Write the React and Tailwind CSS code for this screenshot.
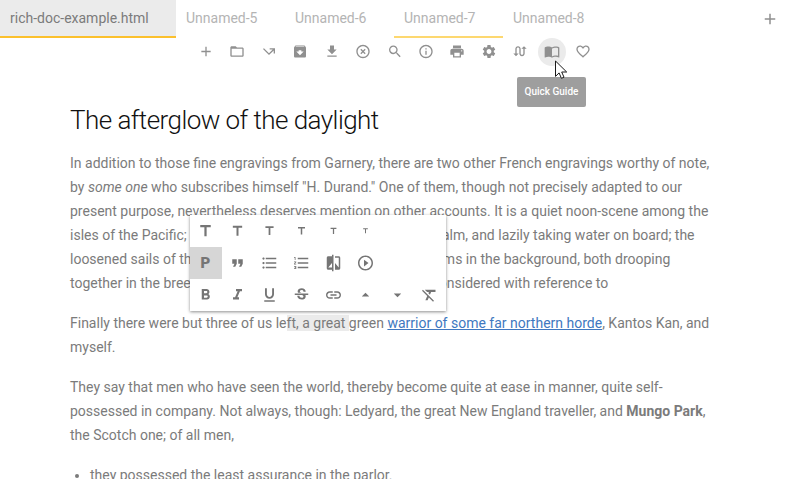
import React from "react";
import {
  MdAdd, MdFolderOpen, MdCallMissedOutgoing, MdArchive, MdFileDownload, MdHighlightOff,
  MdSearch, MdInfoOutline, MdPrint, MdSettings, MdSwapCalls, MdFavoriteBorder, MdTitle,
  MdFormatQuote, MdFormatListBulleted, MdFormatListNumbered, MdCompare, MdPlayCircleOutline,
  MdFormatBold, MdFormatItalic, MdFormatUnderlined, MdStrikethroughS, MdLink,
  MdArrowDropUp, MdArrowDropDown, MdFormatClear,
} from "react-icons/md";

function GuideIcon({ size }) {
  return (
    <svg width={size} height={size} viewBox="0 0 24 24" fill="currentColor">
      <path d="M21 5c-1.11-.35-2.33-.5-3.5-.5-1.95 0-4.05.4-5.5 1.5-1.45-1.1-3.55-1.5-5.5-1.5S2.45 4.9 1 6v14.65c0 .25.25.5.5.5.1 0 .15-.05.25-.05C3.1 20.45 5.05 20 6.5 20c1.95 0 4.05.4 5.5 1.5 1.35-.85 3.8-1.5 5.5-1.5 1.65 0 3.35.3 4.75 1.05.1.05.15.05.25.05.25 0 .5-.25.5-.5V6c-.6-.45-1.25-.75-2-1zm0 13.5c-1.1-.35-2.3-.5-3.5-.5-1.7 0-4.15.65-5.5 1.5V8c1.35-.85 3.8-1.5 5.5-1.5 1.2 0 2.4.15 3.5.5v11.5z" />
    </svg>
  );
}

function Tab({ children, className }) {
  return (
    <div className={"h-[38px] shrink-0 border-b-2 pl-[10px] text-[14px] leading-[37px] " + className}>
      {children}
    </div>
  );
}

const tools = [
  MdAdd, MdFolderOpen, MdCallMissedOutgoing, MdArchive, MdFileDownload, MdHighlightOff,
  MdSearch, MdInfoOutline, MdPrint, MdSettings, MdSwapCalls, GuideIcon, MdFavoriteBorder,
];

const blocks = [null, MdFormatQuote, MdFormatListBulleted, MdFormatListNumbered, MdCompare, MdPlayCircleOutline];
const inline = [
  MdFormatBold, MdFormatItalic, MdFormatUnderlined, MdStrikethroughS, MdLink,
  MdArrowDropUp, MdArrowDropDown, MdFormatClear,
];

function Cell({ children, active }) {
  return (
    <div className={"flex size-8 items-center justify-center " + (active ? "bg-[#d6d6d6]" : "")}>
      <div className="-translate-x-[0.5px]">{children}</div>
    </div>
  );
}

function FormatPopup() {
  return (
    <div className="absolute left-[190px] top-[215px] h-24 w-64 bg-white text-[#757575] shadow-[0_1px_3px_rgba(0,0,0,0.45)]">
      <div className="flex">
        {[18, 16, 14, 12, 10, 8].map((size) => (
          <Cell key={size}><MdTitle size={size} /></Cell>
        ))}
      </div>
      <div className="flex">
        {blocks.map((Icon, i) => (
          <Cell key={i} active={i === 0}>
            {Icon ? <Icon size={18} /> : <span className="block text-[15px] font-black leading-none">P</span>}
          </Cell>
        ))}
      </div>
      <div className="flex">
        {inline.map((Icon, i) => (
          <Cell key={i}><Icon size={18} /></Cell>
        ))}
      </div>
    </div>
  );
}

export default function App() {
  return (
    <div className="relative h-[479px] w-[789px] overflow-hidden bg-white font-['Roboto',sans-serif] text-[#7b7b7b]">
      <header className="flex h-[38px]">
        <Tab className="w-[176px] border-[#fbc02d] bg-[#ebebeb] text-[#7b7b7b]">rich-doc-example.html</Tab>
        <Tab className="w-[109px] border-transparent text-[#b4b4b4]">Unnamed-5</Tab>
        <Tab className="w-[109px] border-transparent text-[#b4b4b4]">Unnamed-6</Tab>
        <Tab className="w-[109px] border-[#fdd870] text-[#b4b4b4]">Unnamed-7</Tab>
        <Tab className="w-[109px] border-transparent text-[#b4b4b4]">Unnamed-8</Tab>
        <div className="ml-auto flex w-[38px] items-center justify-center text-[#909090]">
          <MdAdd size={18} />
        </div>
      </header>

      <nav className="flex h-7 justify-center text-[#909090]">
        {tools.map((Icon, i) => (
          <div key={i} className="flex w-[31.45px] items-center justify-center">
            <div className={"flex size-7 items-center justify-center rounded-full " + (i === 11 ? "bg-[#ebebeb]" : "")}>
              <div className="-translate-y-[0.5px]"><Icon size={16} /></div>
            </div>
          </div>
        ))}
      </nav>

      <article className="w-[720px] pl-[70px] pt-[36px] text-[14px] leading-6">
        <h1 className="text-[26px] font-light leading-9 tracking-[-0.55px] text-[#111111]">The afterglow of the daylight</h1>
        <p className="mt-[13px] whitespace-nowrap">
          In addition to those fine engravings from Garnery, there are two other French engravings worthy of note,<br />
          by <em>some one</em> who subscribes himself "H. Durand." One of them, though not precisely adapted to our<br />
          present purpose, nevertheless deserves mention on other accounts. It is a quiet noon-scene among the<br />
          isles of the Pacific; a French whaler anchored, inshore, in a calm, and lazily taking water on board; the<br />
          loosened sails of the ship, and the long leaves of the few palms in the background, both drooping<br />
          together in the breezeless air. The effect is very fine, when considered with reference to
        </p>
        <p className="mt-4 whitespace-nowrap">
          Finally there were but three of us le<span className="bg-[#ebebeb]">ft, a great </span>green{" "}
          <a className="text-[#4078c0] underline">warrior of some far northern horde</a>, Kantos Kan, and<br />
          myself.
        </p>
        <p className="mt-4 whitespace-nowrap">
          They say that men who have seen the world, thereby become quite at ease in manner, quite self-<br />
          possessed in company. Not always, though: Ledyard, the great New England traveller, and <b>Mungo Park</b>,<br />
          the Scotch one; of all men,
        </p>
        <ul className="mt-4 list-disc pl-5">
          <li>they possessed the least assurance in the parlor.</li>
        </ul>
      </article>

      <FormatPopup />

      <div className="absolute left-[517px] top-[77px] flex h-[30px] w-[69px] items-center justify-center rounded-[2px] bg-[#9e9e9e] pb-[2px] text-[10px] font-medium text-white">
        Quick Guide
      </div>
      <svg className="absolute left-[555px] top-[60px]" width="13" height="20" viewBox="0 0 13 20">
        <path d="M.5 1v15.4l3.6-3.5 2.3 5.4 2.6-1.1-2.3-5.2h5z" fill="#fff" stroke="#1a1a1a" />
      </svg>
    </div>
  );
}
